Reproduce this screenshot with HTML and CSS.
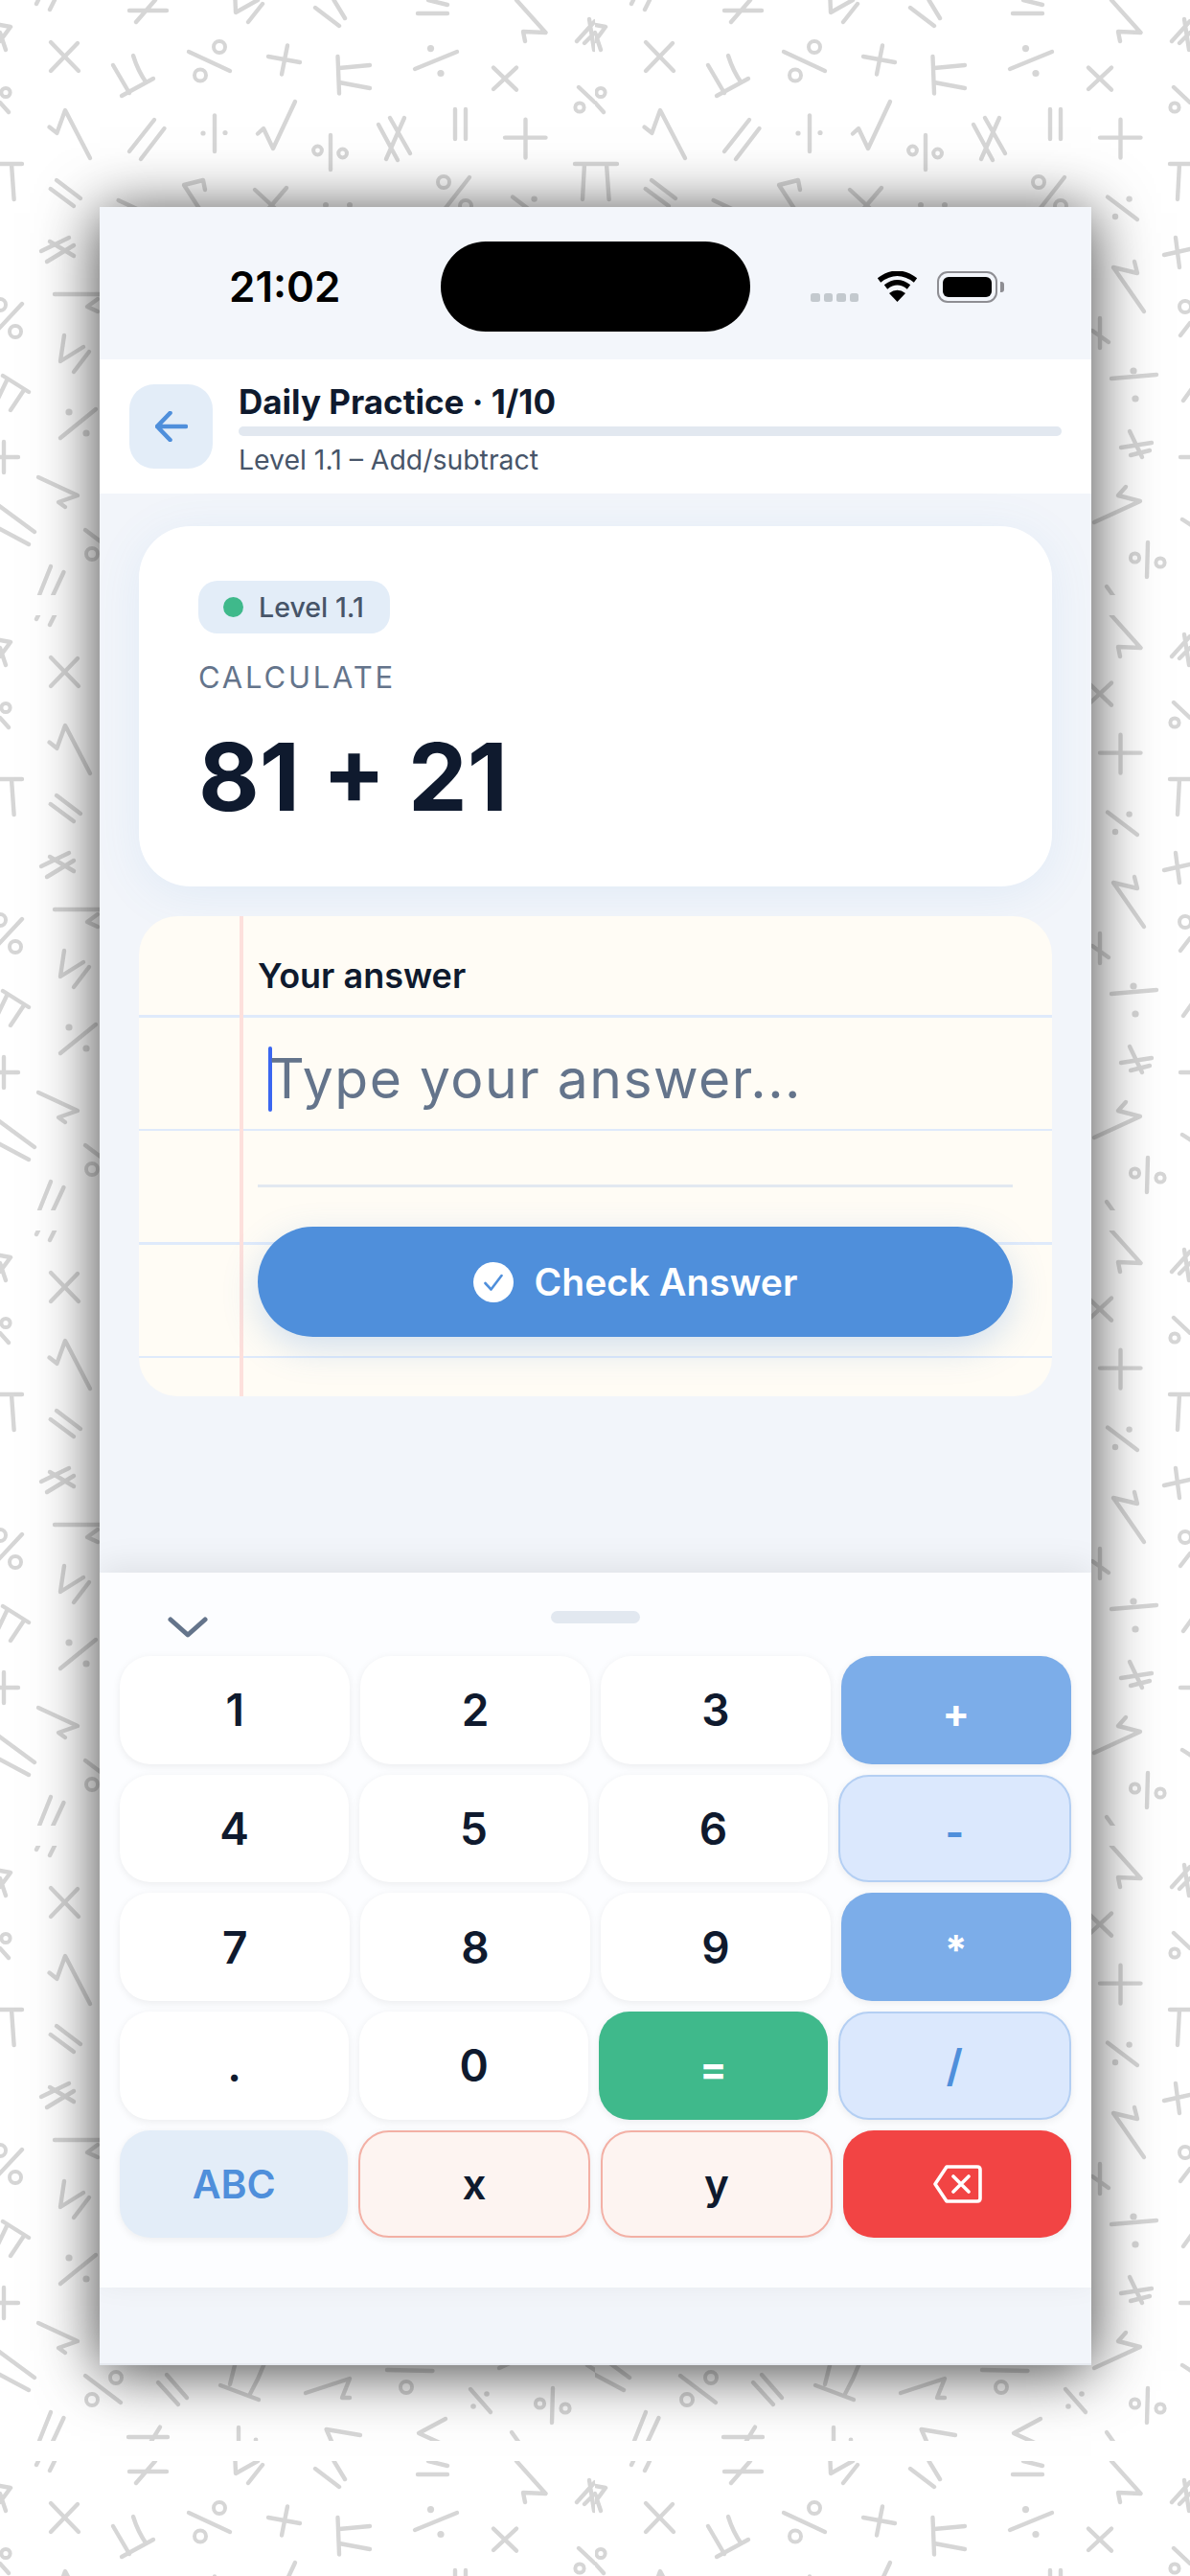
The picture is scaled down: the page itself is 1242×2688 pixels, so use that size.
FILE: index.html
```html
<!DOCTYPE html>
<html lang="en">
<head>
<meta charset="utf-8">
<title>Daily Practice</title>
<link rel="stylesheet" href="styles.css">
</head>
<body>
<svg class="wallpaper" width="1242" height="2688" aria-hidden="true">
  <defs>
    <pattern id="maths" width="621" height="642" patternUnits="userSpaceOnUse">
      <g class="sym">
        <path d="M40 0L38 4M57 0L52 10"/>
        <path d="M135 11H174M162 0L142 23"/>
        <path d="M245.5 0L246 13L269 0M274 4L259 23"/>
        <path d="M329 8L354 27M348.5 0L360 19"/>
        <path d="M436 14H467M447 0L467 5"/>
        <path d="M539 0L569.5 34L546 33L548 43"/>
        <path d="M602 43L621 22M615 20L620 52M610 45L621 34M0 26L11 28M0 43L11 28M0 34L6 52"/>
        <path d="M53 44L82 74M81 45L53 74"/>
        <path d="M118 68L135 97M139 58Q144 74 152.5 86M127 100L160 82"/>
        <path d="M197 54L240 74"/><circle cx="229" cy="49" r="6"/><circle cx="209" cy="78.5" r="6"/>
        <path d="M280 59L313 65M300 47.5L294 77.5"/>
        <path d="M352.5 59L354 97.5M354 71L386 68M354 86L386 92"/>
        <path d="M433 72L477 54"/><circle class="dot" cx="449.5" cy="50.6" r="3.6"/><circle class="dot" cx="460" cy="76.5" r="3.6"/>
        <path d="M515 70.6L539 93.7M539 70.6L515 93"/>
        <path d="M604 91L621 107"/><circle cx="605" cy="112" r="4.6"/><circle cx="6" cy="96.5" r="4.6"/><path d="M0 107L9 117"/>
        <path d="M51.5 132.6L59.4 138.8L68 115L94 165"/>
        <path d="M161 125L135 158M171.5 134L147 166"/>
        <path d="M224 120.5V158"/><circle class="dot" cx="212" cy="139" r="2.6"/><circle class="dot" cx="235" cy="138.5" r="2.6"/>
        <path d="M269 139.5L275 134L285 155L308 106"/>
        <path d="M345 141V177"/><circle cx="331.5" cy="157" r="4.4"/><circle cx="357.6" cy="160" r="4.4"/>
        <path d="M395 130L415 167M407 123L428 160M422 123L403 166"/>
        <path d="M475 114V145M486 114V145"/>
        <path d="M527 143.6H569.5M548.5 124.7V164.6"/>
        <path d="M-5 171H23M12 171L14.6 208M600 171H626M610 171L608 208"/>
        <path d="M59 188L84 207M52.7 197L77 215"/>
        <path d="M123.6 209L160 226"/>
        <path d="M214 198L212 188L192 193L216 230"/>
        <path d="M266 198L292 222M299 196L275 224"/>
        <circle class="dot" cx="340" cy="214" r="3"/><circle class="dot" cx="365" cy="214" r="3"/>
        <circle cx="463" cy="190" r="6"/><path d="M490 185L465 217"/><circle cx="486" cy="215" r="6"/>
        <path d="M535 205.6L566 229"/><circle class="dot" cx="557.6" cy="207.6" r="3.2"/><circle class="dot" cx="543" cy="226" r="3.2"/>
        <path d="M43 262L72 248M49 273L77 256M52 252L77 267"/>
        <path d="M594 266L621 260M606 248L610 279"/>
        <path d="M23 317L-5 347"/><circle cx="16" cy="346" r="6"/><circle cx="0" cy="318" r="6"/>
        <path d="M57 307H110M102 312L91 320L102 325"/>
        <path d="M541 279L573 325M541 279L566 285L563 273"/>
        <path d="M527 332V363M519 345L536 357"/>
        <circle cx="616" cy="320" r="6"/><path d="M621 337L611 350"/>
        <path d="M67 350L63 377L87 362M93 367L77 388"/>
        <path d="M3 392L30 409M7 397L-3 418M25 407L11 428"/>
        <path d="M100 427L63 457"/><circle class="dot" cx="72" cy="430" r="3.6"/><circle class="dot" cx="90" cy="452" r="3.6"/>
        <path d="M539 395L586 391"/><circle class="dot" cx="562" cy="387" r="3.6"/><circle class="dot" cx="564" cy="416" r="3.6"/>
        <path d="M614 418L624 404"/>
        <path d="M-5 477H19M4 461V493M611 477H626"/>
        <path d="M549 467L581 462M559 475L579 470M558 450L571 477"/>
        <path d="M40 498L81 517L61 524L68 529"/>
        <path d="M554 508L546 517L569 523L521 545"/>
        <path d="M-2 527L36 555M-2 551L30 568"/>
        <path d="M613 542L624 549"/>
        <path d="M89 553L126 581"/><circle cx="121" cy="555" r="6"/><circle cx="96" cy="578" r="6"/>
        <path d="M165 560L186 583M174 552L195 576"/>
        <path d="M245.5 540L240 562M276 540Q270 556 261 572M230 563L270 578"/>
        <path d="M319 571L365 556L357 576H365"/>
        <path d="M404 547L451.5 548"/><circle cx="424" cy="565" r="6"/>
        <path d="M491 567L512 591"/><circle class="dot" cx="508" cy="572" r="2.8"/><circle class="dot" cx="494" cy="585" r="2.8"/>
        <path d="M577 566L576 602"/><circle cx="563.5" cy="582" r="4.6"/><circle cx="590" cy="587" r="4.6"/>
        <path d="M53 591L39 626M66.5 597L53 626"/>
        <path d="M134 617H175M167 606.6L155 626"/>
        <path d="M249 607V626"/><circle class="dot" cx="267" cy="620" r="2.4"/>
        <path d="M340.6 609L376 615M340.6 609L348 626"/>
        <path d="M465 598L437 613L470 628"/>
        <path d="M534 612L544 626"/>
      </g>
      <rect class="band" x="0" y="621" width="621" height="21"/>
    </pattern>
  </defs>
  <rect width="1242" height="2688" fill="url(#maths)"/>
</svg>

<main class="phone">
  <div class="status">
    <span class="time">21:02</span>
    <span class="island"></span>
    <span class="signal"><i></i><i></i><i></i><i></i></span>
    <svg class="wifi" width="43" height="32" viewBox="0 0 43 32"><path class="wifi-arc" d="M2.5 9.5Q21.5-5 40.5 9.5M9.5 16.5Q21.5 7 33.5 16.5"/><path class="wifi-fill" d="M21.5 32L13 23Q21.5 16.5 30 23Z"/></svg>
    <span class="battery"><span class="battery-level"></span></span>
    <span class="battery-cap"></span>
  </div>

  <header class="topbar">
    <button class="back" type="button" aria-label="Back">
      <svg width="34" height="32" viewBox="0 0 34 32"><path class="back-arrow" d="M15.5 2L2 16L15.5 30M2 16H32"/></svg>
    </button>
    <div class="topbar-text">
      <h1 class="title">Daily Practice · 1/10</h1>
      <div class="progress"></div>
      <p class="subtitle">Level 1.1 – Add/subtract</p>
    </div>
  </header>

  <section class="content">
    <div class="question">
      <span class="chip"><i class="chip-dot"></i>Level 1.1</span>
      <p class="eyebrow">CALCULATE</p>
      <p class="problem">81 + 21</p>
    </div>

    <form class="paper">
      <label class="answer-label">Your answer</label>
      <div class="answer-input"><i class="caret"></i><span class="placeholder">Type your answer...</span></div>
      <div class="answer-rule"></div>
      <button class="check" type="button">
        <svg width="42" height="42" viewBox="0 0 42 42"><circle class="check-disc" cx="21" cy="21" r="21"/><path class="check-tick" d="M12.5 22L18.5 28.5L29.5 14"/></svg>
        Check Answer
      </button>
    </form>
  </section>

  <section class="keyboard">
    <div class="kb-top">
      <svg class="chevron" width="42" height="22" viewBox="0 0 42 22"><path class="chevron-path" d="M3 3L21 19L39 3"/></svg>
      <span class="handle"></span>
      <span></span>
    </div>
    <div class="kb-rows">
      <div class="kb-row"><span class="key">1</span><span class="key">2</span><span class="key">3</span><span class="key op op-solid">+</span></div>
      <div class="kb-row"><span class="key">4</span><span class="key">5</span><span class="key">6</span><span class="key op op-soft">-</span></div>
      <div class="kb-row"><span class="key">7</span><span class="key">8</span><span class="key">9</span><span class="key op op-solid">*</span></div>
      <div class="kb-row"><span class="key">.</span><span class="key">0</span><span class="key op op-green">=</span><span class="key op op-soft slash">/</span></div>
      <div class="kb-row"><span class="key key-abc">ABC</span><span class="key key-var">x</span><span class="key key-var">y</span><span class="key key-del"><svg width="52" height="40" viewBox="0 0 52 40"><path class="del-path" d="M15 2H47Q50 2 50 5V35Q50 38 47 38H15L3 20ZM22 12L38 28M38 12L22 28"/></svg></span></div>
    </div>
  </section>
  <div class="home-area"></div>
</main>
</body>
</html>
```

FILE: styles.css
```css
* { box-sizing: border-box; }
html, body { margin: 0; padding: 0; }
body {
  position: relative;
  width: 1242px;
  height: 2688px;
  overflow: hidden;
  background: #fff;
  font-family: Inter, "Liberation Sans", sans-serif;
  padding: 216px 103px 0 104px;
}
.wallpaper { position: absolute; left: 0; top: 0; }
.sym path { fill: none; stroke: #d6d6d6; stroke-width: 4.4; stroke-linecap: round; stroke-linejoin: round; }
.sym circle { fill: none; stroke: #d6d6d6; stroke-width: 4; }
.sym circle.dot { fill: #d6d6d6; stroke: none; }
.band { fill: #fff; }

.phone {
  position: relative;
  width: 1035px;
  height: 2252px;
  display: flex;
  flex-direction: column;
  background: #f2f5fa;
  box-shadow: 0 6px 60px rgba(0, 0, 0, .75);
  border-bottom: 2px solid #e6eaf0;
  overflow: hidden;
}

/* status bar */
.status {
  height: 159px;
  flex: none;
  display: flex;
  align-items: center;
  padding: 36px 0 29px 135px;
  background: #f3f6fb;
}
.time { width: 111px; font-size: 44px; font-weight: 600; color: #000; line-height: 1; white-space: nowrap; }
.island { width: 323px; height: 94px; margin-left: 110px; border-radius: 47px; background: #000; }
.signal { display: flex; gap: 4px; margin-left: 63px; margin-top: 23px; }
.signal i { width: 9.5px; height: 9px; border-radius: 2.5px; background: #c3c9ce; }
.wifi { margin-left: 19px; }
.wifi-arc { fill: none; stroke: #000; stroke-width: 5.5; }
.wifi-fill { fill: #000; }
.battery { width: 63px; height: 33px; margin-left: 20px; padding: 3px; border: 2.5px solid #8e8e93; border-radius: 11px; display: flex; }
.battery-level { flex: 1; background: #000; border-radius: 6px; margin: 1px; }
.battery-cap { width: 4px; height: 11px; margin-left: 3px; background: #8e8e93; border-radius: 0 3px 3px 0; }

/* header */
.topbar {
  height: 140px;
  flex: none;
  display: flex;
  align-items: center;
  gap: 27px;
  padding: 0 31px;
  background: #fff;
}
.back {
  width: 87px;
  height: 88px;
  flex: none;
  padding: 0;
  border: 0;
  border-radius: 26px;
  background: #e3edf8;
  display: flex;
  align-items: center;
  justify-content: center;
}
.back-arrow { fill: none; stroke: #4f8fdb; stroke-width: 4.6; stroke-linecap: round; stroke-linejoin: round; }
.topbar-text { flex: 1; min-width: 0; padding-top: 4px; }
.title { margin: 0; font-size: 35px; line-height: 42px; font-weight: 700; color: #0f1a2e; }
.progress { height: 10px; margin-top: 5px; border-radius: 5px; background: #e2e8f0; }
.subtitle { margin: 9px 0 0; font-size: 28.4px; line-height: 32px; color: #475569; }

/* content */
.content {
  flex: 1;
  min-height: 0;
  padding: 34px 41px 0;
  display: flex;
  flex-direction: column;
  gap: 31px;
}
.question {
  height: 376px;
  flex: none;
  padding: 57px 62px 0;
  border-radius: 54px;
  background: #fff;
  box-shadow: 0 8px 50px rgba(79, 143, 219, .1);
}
.chip {
  display: inline-flex;
  align-items: center;
  gap: 16px;
  height: 55px;
  padding: 0 27px 0 26px;
  border-radius: 20px;
  background: #e3edf8;
  color: #475569;
  font-size: 28.6px;
  font-weight: 500;
}
.chip-dot { width: 21px; height: 21px; border-radius: 50%; background: #3fb98b; }
.eyebrow { margin: 28px 0 0; font-size: 31px; line-height: 36px; letter-spacing: 2.8px; color: #64748b; }
.problem { margin: 28px 0 0; font-size: 98px; line-height: 115px; font-weight: 700; color: #0f1a2e; }

.paper {
  height: 501px;
  flex: none;
  position: relative;
  padding: 42px 41px 0 124px;
  border-radius: 40px;
  background:
    linear-gradient(90deg, transparent 105px, #fde0dc 105px, #fde0dc 108.5px, transparent 108.5px),
    repeating-linear-gradient(180deg, transparent 0, transparent 103px, #dfeafb 103px, #dfeafb 105.5px, transparent 105.5px, transparent 118.5px);
  background-position: 0 0, 0 0;
  background-color: #fffcf5;
  overflow: hidden;
}
.answer-label { display: block; font-size: 36px; line-height: 40px; font-weight: 600; color: #0f1a2e; }
.answer-input { display: flex; align-items: center; height: 68px; margin-top: 54px; }
.caret { width: 4px; height: 68px; margin-left: 11px; border-radius: 2px; background: #3b66f0; flex: none; }
.placeholder { margin-left: -3px; font-size: 57px; line-height: 68px; letter-spacing: 1.5px; color: #64748b; white-space: nowrap; }
.answer-rule { height: 3px; margin-top: 76px; background: #e2e8f0; }
.check {
  width: 100%;
  height: 115px;
  margin-top: 41px;
  display: flex;
  align-items: center;
  justify-content: center;
  gap: 22px;
  border: 0;
  border-radius: 58px;
  background: #4f8fdb;
  color: #fff;
  font-family: inherit;
  font-size: 39px;
  font-weight: 600;
  box-shadow: 0 12px 36px rgba(79, 143, 219, .25);
}
.check-disc { fill: #fff; }
.check-tick { fill: none; stroke: #4f8fdb; stroke-width: 2.6; stroke-linecap: round; stroke-linejoin: round; }

/* keyboard */
.keyboard {
  flex: none;
  height: 746px;
  padding: 0 21px;
  background: #fcfdff;
  box-shadow: 0 -8px 32px rgba(0, 0, 0, .08);
  position: relative;
}
.kb-top {
  height: 87px;
  display: grid;
  grid-template-columns: 1fr auto 1fr;
  align-items: start;
  padding-top: 40px;
}
.chevron { margin: 6px 0 0 50px; }
.chevron-path { fill: none; stroke: #64748b; stroke-width: 5; stroke-linecap: round; stroke-linejoin: round; }
.handle { width: 93px; height: 13px; border-radius: 7px; background: #e2e8f0; }
.kb-rows { display: flex; flex-direction: column; gap: 11px; }
.kb-row { display: flex; gap: 10.5px; height: 112.7px; }
.key {
  flex: 1 1 0;
  display: flex;
  align-items: center;
  justify-content: center;
  border-radius: 32px;
  background: #fff;
  box-shadow: 0 2px 8px rgba(0, 0, 0, .07);
  font-size: 46px;
  font-weight: 600;
  color: #0f1a2e;
}
.op { font-size: 42px; font-weight: 700; padding-top: 6px; color: #fff; }
.op-solid { background: #7cade9; }
.op-soft { background: #dbe8fd; border: 2.5px solid #b4cff3; color: #4f8fdb; }
.op-green { background: #3fb98b; }
.slash { font-size: 46px; font-weight: 600; padding-top: 0; }
.key-abc { background: #e3edf8; color: #4f8fdb; font-size: 41px; }
.key-var { background: #fdf4f1; border: 2.5px solid #f3b0a5; font-size: 44px; }
.key-del { background: #f24444; }
.del-path { fill: none; stroke: #fff; stroke-width: 3.6; stroke-linejoin: round; stroke-linecap: round; }

.home-area { flex: none; height: 79px; }
```
